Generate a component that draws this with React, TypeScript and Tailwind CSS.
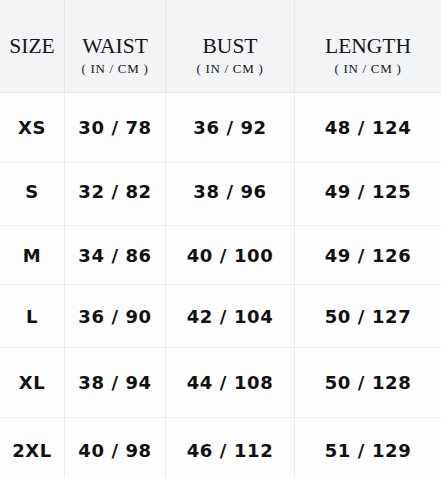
const rows = [
  { size: "XS", waist: "30 / 78", bust: "36 / 92", length: "48 / 124", h: "h-[70px]", pad: "" },
  { size: "S", waist: "32 / 82", bust: "38 / 96", length: "49 / 125", h: "h-[63px]", pad: "pb-[6px]" },
  { size: "M", waist: "34 / 86", bust: "40 / 100", length: "49 / 126", h: "h-[59px]", pad: "" },
  { size: "L", waist: "36 / 90", bust: "42 / 104", length: "50 / 127", h: "h-[63px]", pad: "" },
  { size: "XL", waist: "38 / 94", bust: "44 / 108", length: "50 / 128", h: "h-[70px]", pad: "" },
  { size: "2XL", waist: "40 / 98", bust: "46 / 112", length: "51 / 129", h: "h-[60px]", pad: "pt-[4px]" },
];

const serif = "font-['Liberation_Serif',serif]";
const sans = "font-['DejaVu_Sans',sans-serif]";

function HeadCell({ title, unit = true, last = false }: { title: string; unit?: boolean; last?: boolean }) {
  return (
    <div
      className={`flex flex-col items-center pt-[34px] text-[#161616] ${serif} ${
        last ? "" : "border-r border-[#e6e7e9]"
      }`}
    >
      <div className="text-[21.5px] leading-[24px]">{title}</div>
      {unit && <div className="mt-[3px] text-[13px] leading-[16px] tracking-[0.7px]">( IN / CM )</div>}
    </div>
  );
}

function Cell({ children, pad, last = false }: { children: string; pad: string; last?: boolean }) {
  return (
    <div
      className={`flex items-center justify-center text-[18px] font-bold tracking-[0.6px] text-[#111] ${sans} ${pad} ${
        last ? "" : "border-r border-[#ececec]"
      }`}
    >
      {children}
    </div>
  );
}

export default function App() {
  return (
    <div className="w-[441px] h-[480px] bg-white overflow-hidden">
      <div className="grid grid-cols-[65px_101px_129px_1fr] h-[93px] bg-[#f3f4f6] border-b border-[#e4e5e7]">
        <HeadCell title="SIZE" unit={false} />
        <HeadCell title="WAIST" />
        <HeadCell title="BUST" />
        <HeadCell title="LENGTH" last />
      </div>
      {rows.map((r, i) => (
        <div
          key={r.size}
          className={`grid grid-cols-[65px_101px_129px_1fr] bg-[#fdfdfd] ${r.h} ${
            i < rows.length - 1 ? "border-b border-[#ececec]" : ""
          }`}
        >
          <Cell pad={r.pad}>{r.size}</Cell>
          <Cell pad={r.pad}>{r.waist}</Cell>
          <Cell pad={r.pad}>{r.bust}</Cell>
          <Cell pad={r.pad} last>{r.length}</Cell>
        </div>
      ))}
    </div>
  );
}
